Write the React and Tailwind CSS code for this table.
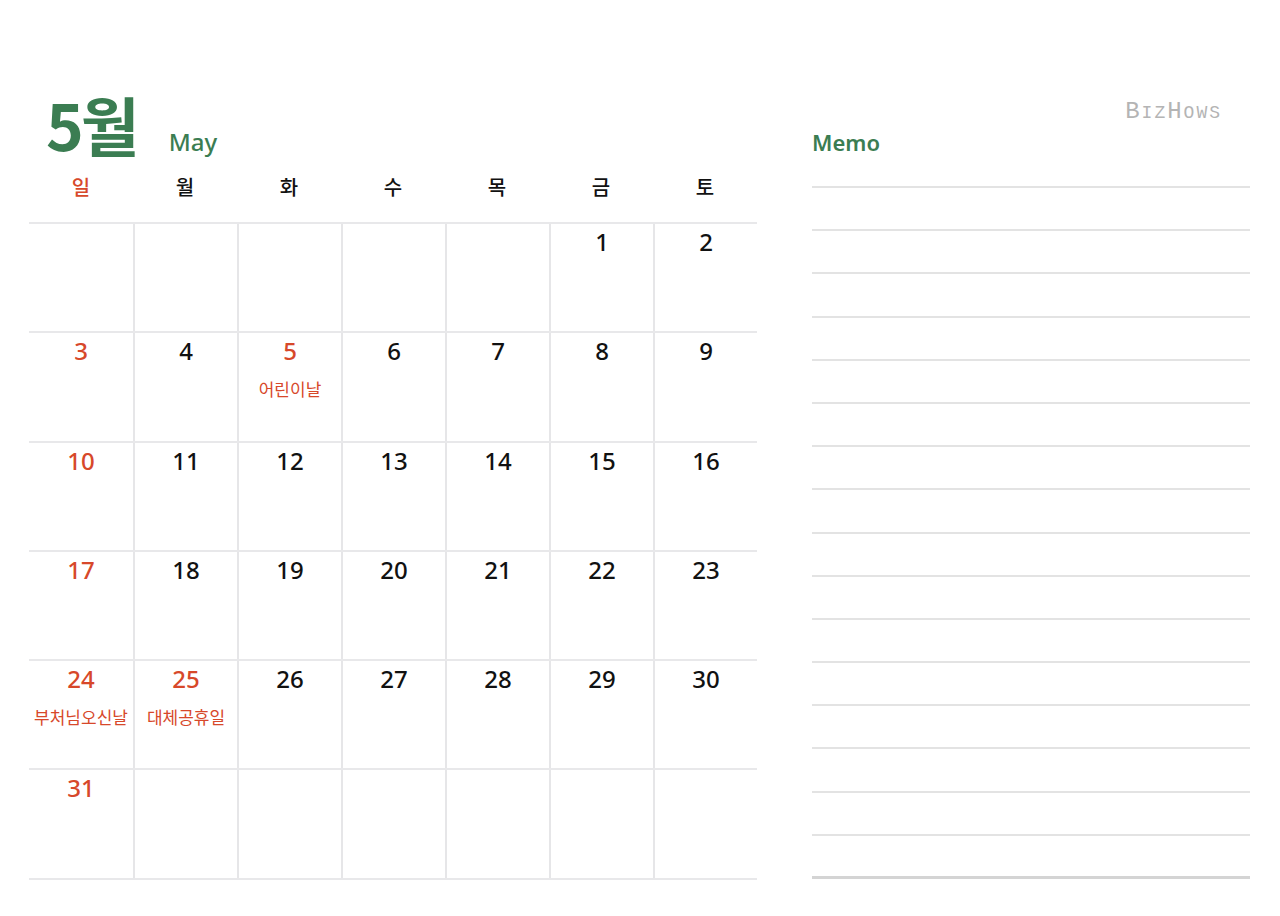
const GREEN = "text-[#3b7d52]";
const RED = "text-[#d7482a]";

const DAYS = ["일", "월", "화", "수", "목", "금", "토"];

const HOLIDAYS = {
  5: "어린이날",
  24: "부처님오신날",
  25: "대체공휴일",
};

const RED_DAYS = [3, 5, 10, 17, 24, 25, 31];

function buildWeeks() {
  // May starts on Friday
  const cells = [];
  for (let i = 0; i < 5; i++) cells.push(null);
  for (let d = 1; d <= 31; d++) cells.push(d);
  while (cells.length < 42) cells.push(null);
  const weeks = [];
  for (let i = 0; i < 42; i += 7) weeks.push(cells.slice(i, i + 7));
  return weeks;
}

function DayCell({ day, col }) {
  const red = day && RED_DAYS.includes(day);
  return (
    <div
      className={`h-full flex flex-col items-center pt-[2px] ${
        col > 0 ? "border-l-2 border-[#e6e6e8]" : ""
      }`}
    >
      {day && (
        <span className={`text-[24px] leading-[32px] font-medium ${red ? RED : "text-[#111]"}`}>{day}</span>
      )}
      {day && HOLIDAYS[day] && (
        <span className={`text-[17px] leading-[22px] mt-[12px] whitespace-nowrap ${RED}`}>
          {HOLIDAYS[day]}
        </span>
      )}
    </div>
  );
}

export default function App() {
  const weeks = buildWeeks();
  return (
    <div
      className="w-[1280px] h-[916px] bg-white flex"
      style={{ fontFamily: '"Noto Sans", "Noto Sans CJK KR", sans-serif' }}
    >
      {/* Calendar */}
      <div className="ml-[29px] w-[728px] pt-[84px]">
        <div className="flex items-end h-[71px] pl-[17px]">
          <span
            className={`text-[64px] leading-[64px] font-bold tracking-[-3px] ${GREEN}`}
            style={{ fontFamily: '"Noto Sans CJK KR", sans-serif' }}
          >
            5월
          </span>
          <span className={`ml-[32px] mb-[-2px] text-[24px] leading-[30px] font-medium ${GREEN}`}>May</span>
        </div>
        <div className="grid grid-cols-7 h-[67px] items-center">
          {DAYS.map((d, i) => (
            <div
              key={d}
              className={`text-center text-[20px] font-medium pb-[4px] ${i === 0 ? RED : "text-[#111]"}`}
              style={{ fontFamily: '"Noto Sans CJK KR", sans-serif' }}
            >
              {d}
            </div>
          ))}
        </div>
        <div className="border-t-2 border-[#e8e8ea]">
          {weeks.map((w, r) => (
            <div
              key={r}
              className={`grid grid-cols-7 h-[109.3px] border-b-2 border-[#e8e8ea]`}
            >
              {w.map((day, c) => (
                <DayCell key={c} day={day} col={c} />
              ))}
            </div>
          ))}
        </div>
      </div>

      {/* Memo */}
      <div className="ml-[55px] w-[438px] pt-[100px]">
        <div
          className="flex justify-end items-baseline pr-[28px] h-[26px] text-[#b4b4b4]"
          style={{ fontFamily: '"Liberation Mono", monospace' }}
        >
          <span className="text-[24px] leading-none">B</span>
          <span className="text-[18px] leading-none tracking-[2px] ml-[2px]">IZ</span>
          <span className="text-[24px] leading-none">H</span>
          <span className="text-[18px] leading-none tracking-[2px] ml-[2px]">OWS</span>
        </div>
        <div className={`text-[22px] leading-[30px] font-semibold mt-[1px] ${GREEN}`}>Memo</div>
        <div className="mt-[29px] border-t-2 border-[#e3e3e3]">
          {Array.from({ length: 16 }).map((_, i) => (
            <div
              key={i}
              className={`h-[43.2px] ${
                i === 15 ? "border-b-[3px] border-[#d4d4d4]" : "border-b-2 border-[#e3e3e3]"
              }`}
            />
          ))}
        </div>
      </div>
    </div>
  );
}
